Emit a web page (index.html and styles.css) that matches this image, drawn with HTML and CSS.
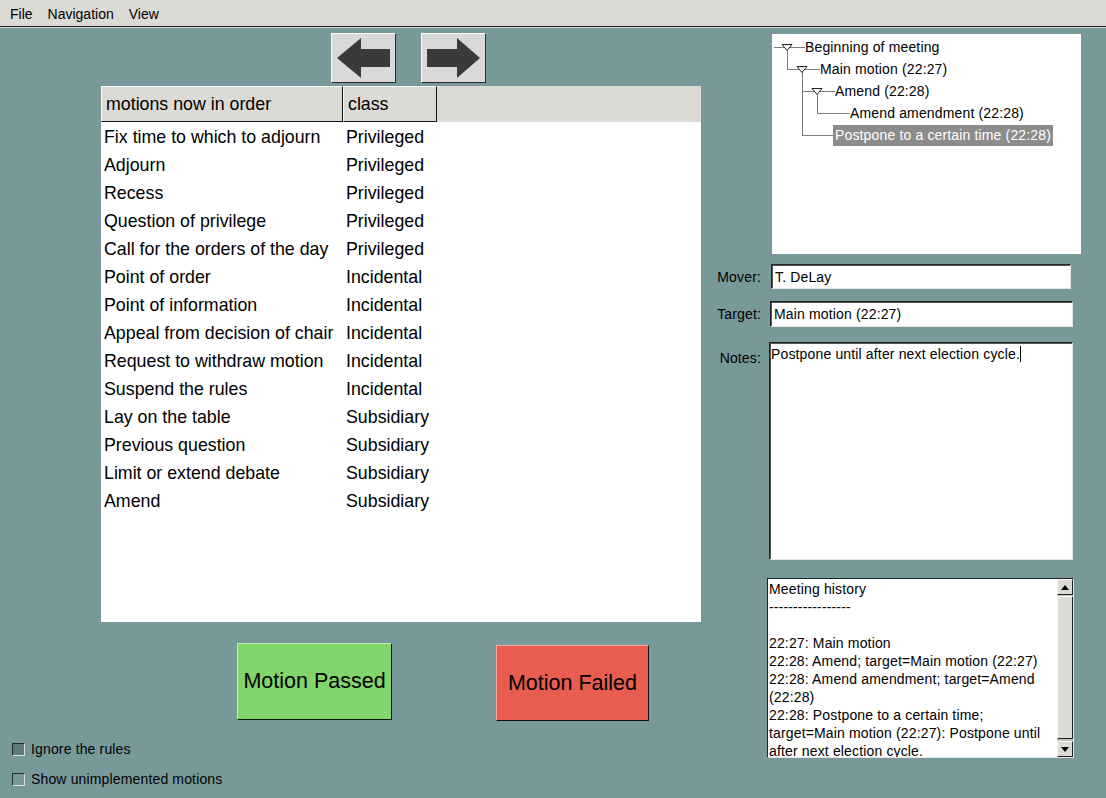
FILE: index.html
```html
<!DOCTYPE html>
<html>
<head>
<meta charset="utf-8">
<link rel="stylesheet" href="styles.css">
</head>
<body>
<div class="menubar">
  <span class="menu-item">File</span>
  <span class="menu-item">Navigation</span>
  <span class="menu-item">View</span>
</div>
<div class="main">
  <div class="left">
    <div class="arrows">
      <div class="arrow-btn">
        <svg width="63" height="48" viewBox="1 1 63 48"><polygon points="6,25 30,5 30,16 59,16 59,34 30,34 30,45" fill="#3a3a3a"/></svg>
      </div>
      <div class="arrow-btn">
        <svg width="63" height="48" viewBox="1 1 63 48"><polygon points="6,16 36,16 36,5 59,25 36,45 36,34 6,34" fill="#3a3a3a"/></svg>
      </div>
    </div>
    <div class="motions">
      <div class="thead">
        <div class="th">motions now in order</div>
        <div class="th">class</div>
        <div class="th-fill"></div>
      </div>
      <div class="tbody">
        <div class="row"><span class="c1">Fix time to which to adjourn</span><span class="c2">Privileged</span></div>
        <div class="row"><span class="c1">Adjourn</span><span class="c2">Privileged</span></div>
        <div class="row"><span class="c1">Recess</span><span class="c2">Privileged</span></div>
        <div class="row"><span class="c1">Question of privilege</span><span class="c2">Privileged</span></div>
        <div class="row"><span class="c1">Call for the orders of the day</span><span class="c2">Privileged</span></div>
        <div class="row"><span class="c1">Point of order</span><span class="c2">Incidental</span></div>
        <div class="row"><span class="c1">Point of information</span><span class="c2">Incidental</span></div>
        <div class="row"><span class="c1">Appeal from decision of chair</span><span class="c2">Incidental</span></div>
        <div class="row"><span class="c1">Request to withdraw motion</span><span class="c2">Incidental</span></div>
        <div class="row"><span class="c1">Suspend the rules</span><span class="c2">Incidental</span></div>
        <div class="row"><span class="c1">Lay on the table</span><span class="c2">Subsidiary</span></div>
        <div class="row"><span class="c1">Previous question</span><span class="c2">Subsidiary</span></div>
        <div class="row"><span class="c1">Limit or extend debate</span><span class="c2">Subsidiary</span></div>
        <div class="row"><span class="c1">Amend</span><span class="c2">Subsidiary</span></div>
      </div>
    </div>
    <div class="verdicts">
      <div class="btn btn-pass">Motion Passed</div>
      <div class="btn btn-fail">Motion Failed</div>
    </div>
    <div class="options">
      <div class="opt"><span class="box on"></span><span>Ignore the rules</span></div>
      <div class="opt"><span class="box"></span><span>Show unimplemented motions</span></div>
    </div>
  </div>
  <div class="right">
    <div class="tree">
      <svg class="tree-lines" width="309" height="220" viewBox="0 0 309 220">
        <g stroke="#7c7c7c" stroke-width="1" fill="none">
          <line x1="2" y1="13.5" x2="33" y2="13.5"/>
          <line x1="15.5" y1="16" x2="15.5" y2="35.5"/>
          <line x1="15" y1="35.5" x2="48" y2="35.5"/>
          <line x1="30.5" y1="38" x2="30.5" y2="101.5"/>
          <line x1="30" y1="57.5" x2="63" y2="57.5"/>
          <line x1="45.5" y1="60" x2="45.5" y2="79.5"/>
          <line x1="45" y1="79.5" x2="78" y2="79.5"/>
          <line x1="30" y1="101.5" x2="61" y2="101.5"/>
        </g>
        <g stroke="#222" stroke-width="1" fill="#fff">
          <polygon points="10,10.5 20,10.5 15,16.5"/>
          <polygon points="25,32.5 35,32.5 30,38.5"/>
          <polygon points="40,54.5 50,54.5 45,60.5"/>
        </g>
      </svg>
      <div class="node l0">Beginning of meeting</div>
      <div class="node l1">Main motion (22:27)</div>
      <div class="node l2">Amend (22:28)</div>
      <div class="node l3">Amend amendment (22:28)</div>
      <div class="node l2"><span class="sel">Postpone to a certain time (22:28)</span></div>
    </div>
    <div class="field mover">
      <span class="label">Mover:</span>
      <div class="entry">T. DeLay</div>
    </div>
    <div class="field target">
      <span class="label">Target:</span>
      <div class="entry">Main motion (22:27)</div>
    </div>
    <div class="field notes">
      <span class="label">Notes:</span>
      <div class="entry">Postpone until after next election cycle.<span class="caret"></span></div>
    </div>
    <div class="history">
      <div class="hist-text">
        <div>Meeting history</div>
        <div>-----------------</div>
        <div>&nbsp;</div>
        <div>22:27: Main motion</div>
        <div>22:28: Amend; target=Main motion (22:27)</div>
        <div>22:28: Amend amendment; target=Amend</div>
        <div>(22:28)</div>
        <div>22:28: Postpone to a certain time;</div>
        <div>target=Main motion (22:27): Postpone until</div>
        <div>after next election cycle.</div>
      </div>
      <div class="sb">
        <div class="sb-btn"><span class="tri-up"></span></div>
        <div class="sb-thumb"></div>
        <div class="sb-btn"><span class="tri-down"></span></div>
      </div>
    </div>
  </div>
</div>
</body>
</html>
```
FILE: styles.css
```css
html, body {
  margin: 0;
  padding: 0;
}
body {
  width: 1106px;
  height: 798px;
  background: #789999;
  font-family: "Liberation Sans", Arial, sans-serif;
  color: #000;
  overflow: hidden;
}
.menubar {
  height: 26px;
  box-sizing: border-box;
  padding-top: 2px;
  background: #dcdad5;
  border-bottom: 1px solid #1e1e1e;
  display: flex;
  align-items: center;
  padding-left: 2.5px;
  font-size: 14px;
}
.menubar {
  height: 27px;
}
.menu-item {
  padding: 0 7.5px;
}
.main {
  border-top: 1px solid #d4d4d0;
  display: flex;
  height: 770px;
}
.left {
  width: 706px;
  display: flex;
  flex-direction: column;
}
.right {
  flex: 1;
  display: flex;
  flex-direction: column;
  letter-spacing: 0.15px;
}
.arrows {
  display: flex;
  gap: 25px;
  margin: 5px 0 0 331px;
}
.arrow-btn {
  width: 65px;
  height: 50px;
  box-sizing: border-box;
  background: #d9d9d9;
  border: 1px solid;
  border-color: #fafafa #2a2a2a #2a2a2a #fafafa;
}
.arrow-btn svg {
  display: block;
}
.motions {
  margin: 3px 0 0 101px;
  width: 600px;
  height: 536px;
  background: #fff;
  font-size: 17.8px;
}
.thead {
  display: grid;
  grid-template-columns: 242px 94px 1fr;
  height: 36px;
  background: #dcdad5;
}
.th {
  box-sizing: border-box;
  border: 1px solid;
  border-color: #fafafa #111 #111 #fafafa;
  padding-left: 4px;
  display: flex;
  align-items: center;
}
.tbody {
  padding-top: 1px;
}
.row {
  display: grid;
  grid-template-columns: 242px 94px;
  height: 28px;
  align-items: center;
  white-space: nowrap;
}
.c1, .c2 {
  padding-left: 3px;
}
.verdicts {
  display: flex;
  align-items: flex-start;
  gap: 104px;
  margin: 21px 0 0 237px;
}
.btn {
  box-sizing: border-box;
  display: flex;
  align-items: center;
  justify-content: center;
  font-size: 21.5px;
  border: 1px solid;
}
.btn-pass {
  width: 155px;
  height: 77px;
  background: #82d56b;
  border-color: #bdf2ac #111 #111 #bdf2ac;
}
.btn-fail {
  width: 153px;
  height: 76px;
  margin-top: 2px;
  background: #e95c50;
  border-color: #f7a89f #111 #111 #f7a89f;
}
.options {
  margin: 13px 0 0 12px;
  letter-spacing: 0.15px;
}
.opt {
  height: 30px;
  display: flex;
  align-items: center;
  gap: 6px;
  font-size: 14px;
}
.box {
  width: 13px;
  height: 13px;
  box-sizing: border-box;
  border: 1px solid;
  border-color: #2a2a2a #dedede #dedede #2a2a2a;
}
.box.on {
  background: #5c7b7b;
}
.tree {
  position: relative;
  margin: 6px 0 0 66px;
  width: 309px;
  height: 220px;
  box-sizing: border-box;
  padding-top: 2px;
  background: #fff;
  font-size: 14px;
}
.tree-lines {
  position: absolute;
  left: 0;
  top: 0;
}
.node {
  position: relative;
  height: 22px;
  display: flex;
  align-items: center;
  white-space: nowrap;
}
.l0 { padding-left: 33px; }
.l1 { padding-left: 48px; }
.l2 { padding-left: 63px; }
.l3 { padding-left: 78px; }
.sel {
  background: #8c8c8c;
  color: #fff;
  padding: 2px 2px 3px 2px;
  margin-left: -2px;
}
.field {
  display: flex;
  align-items: center;
  font-size: 14px;
}
.label {
  width: 55px;
  text-align: right;
}
.entry {
  box-sizing: border-box;
  background: #fff;
  border: 1px solid;
  border-color: #222 #e4e4e4 #e4e4e4 #222;
  box-shadow: inset 1px 1px 0 #555;
  display: flex;
  align-items: center;
  padding-left: 3px;
  white-space: nowrap;
}
.mover {
  margin-top: 10px;
}
.mover .entry {
  margin-left: 10px;
  width: 300px;
  height: 25px;
}
.target {
  margin-top: 12px;
}
.target .entry {
  margin-left: 9px;
  width: 303px;
  height: 26px;
}
.notes {
  margin-top: 15px;
  align-items: flex-start;
}
.notes .label {
  padding-top: 8px;
}
.notes .entry {
  margin-left: 8px;
  width: 304px;
  height: 218px;
  align-items: flex-start;
  padding: 2px 0 0 1px;
  line-height: 18px;
}
.caret {
  display: inline-block;
  width: 1px;
  height: 16px;
  margin-top: 1px;
  background: #000;
}
.history {
  margin: 18px 0 0 61px;
  width: 307px;
  height: 180px;
  box-sizing: border-box;
  display: flex;
  background: #fff;
  border: 1px solid;
  border-color: #222 #e4e4e4 #e4e4e4 #222;
  font-size: 14px;
}
.hist-text {
  flex: 1;
  overflow: hidden;
  padding: 1px 0 0 1px;
  line-height: 18px;
  white-space: nowrap;
}
.sb {
  width: 16px;
  display: flex;
  flex-direction: column;
  background: #c4c2be;
}
.sb-btn {
  height: 16px;
  box-sizing: border-box;
  background: #dcdad5;
  border: 1px solid;
  border-color: #fafafa #222 #222 #fafafa;
  display: flex;
  align-items: center;
  justify-content: center;
}
.sb-thumb {
  flex: 1;
  margin: 1px 0 2px 0;
  box-sizing: border-box;
  background: #dcdad5;
  border: 1px solid;
  border-color: #fafafa #222 #222 #fafafa;
}
.tri-up {
  width: 0;
  height: 0;
  border-left: 4px solid transparent;
  border-right: 4px solid transparent;
  border-bottom: 5px solid #000;
}
.tri-down {
  width: 0;
  height: 0;
  border-left: 4px solid transparent;
  border-right: 4px solid transparent;
  border-top: 5px solid #000;
}
```
